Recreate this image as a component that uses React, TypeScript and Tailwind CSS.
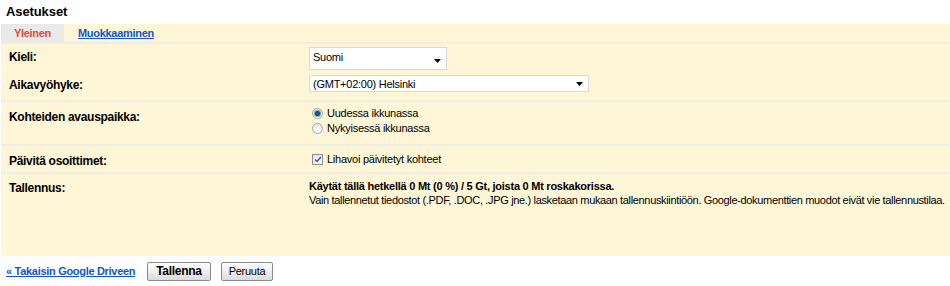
import React from "react";

const font = { fontFamily: '"Liberation Sans", Arial, sans-serif' };

function Arrow() {
  return (
    <svg width="7" height="4" viewBox="0 0 7 4" className="shrink-0">
      <path d="M0 0h7L3.5 4z" fill="#000" />
    </svg>
  );
}

function Radio({ checked }: { checked?: boolean }) {
  return (
    <span className="flex h-[11px] w-[11px] items-center justify-center rounded-full border border-[#a4a4a4] bg-gradient-to-b from-[#e6e6e6] to-[#ffffff]">
      {checked && <span className="h-[5px] w-[5px] rounded-full bg-[#1e4e7a] shadow-[0_0_0_1px_#6c9cc6]" />}
    </span>
  );
}

function Label({ children, className = "" }: { children: React.ReactNode; className?: string }) {
  return <div className={`pl-2 text-[12px] font-bold tracking-[-0.3px] ${className}`}>{children}</div>;
}

export default function App() {
  return (
    <div className="h-[286px] w-[950px] bg-white text-[11px] tracking-[-0.25px] text-black" style={font}>
      <div className="pl-[6px] pt-[3px] pb-[4px] text-[13px] font-bold leading-[17px] tracking-[-0.1px]">Asetukset</div>
      <div className="ml-[1px] h-[232px] bg-[#fff6d7]">
        <div className="flex h-[18px] items-stretch font-bold tracking-[-0.3px]">
          <div className="flex w-[63px] items-center justify-center bg-[#e9e9e9] text-[#dd4b39]">Yleinen</div>
          <a className="ml-[14px] flex items-center text-[#1155cc] underline">Muokkaaminen</a>
        </div>

        <div className="grid h-[58px] grid-cols-[308px_1fr] grid-rows-[23px_17px] gap-y-[5px] border-t-2 border-[#efeee3] pt-[3px]">
          <Label className="pt-[1px]">Kieli:</Label>
          <div className="relative w-[138px] border border-[#d9d9d9] bg-white pl-[3px] pt-[2px] leading-[14px]">
            Suomi
            <span className="absolute right-[5px] bottom-[6px] flex"><Arrow /></span>
          </div>
          <Label className="pt-[1px]">Aikavyöhyke:</Label>
          <div className="relative w-[280px] border border-[#d9d9d9] bg-white pl-[3px] pt-[1px] leading-[14px]">
            (GMT+02:00) Helsinki
            <span className="absolute right-[5px] top-[6px] flex"><Arrow /></span>
          </div>
        </div>

        <div className="grid h-[44px] grid-cols-[308px_1fr] border-t-2 border-[#efeee3] pt-[4px]">
          <Label className="pt-[2px]">Kohteiden avauspaikka:</Label>
          <div className="flex flex-col gap-[1px] pl-[3px]">
            <label className="flex items-center gap-[4px] leading-[14px]"><Radio checked /> Uudessa ikkunassa</label>
            <label className="flex items-center gap-[4px] leading-[14px]"><Radio /> Nykyisessä ikkunassa</label>
          </div>
        </div>

        <div className="grid h-[28px] grid-cols-[308px_1fr] border-t-2 border-[#efeee3] pt-[6px]">
          <Label>Päivitä osoittimet:</Label>
          <label className="flex items-center gap-[4px] self-start pl-[3px] leading-[14px]">
            <span className="flex h-[11px] w-[11px] items-center justify-center border border-[#8e8f8f] bg-gradient-to-b from-[#dfe6f0] to-[#ffffff]">
              <svg width="8" height="7" viewBox="0 0 8 7"><path d="M1 3.5l2 2L7 1" stroke="#4a5e93" strokeWidth="1.5" fill="none" /></svg>
            </span>
            Lihavoi päivitetyt kohteet
          </label>
        </div>

        <div className="grid grid-cols-[308px_1fr] border-t-2 border-[#efeee3] pt-[5px]">
          <Label>Tallennus:</Label>
          <div className="leading-[14px]">
            <div className="font-bold">Käytät tällä hetkellä 0 Mt (0 %) / 5 Gt, joista 0 Mt roskakorissa.</div>
            <div className="whitespace-nowrap tracking-[-0.34px]">Vain tallennetut tiedostot (.PDF, .DOC, .JPG jne.) lasketaan mukaan tallennuskiintiöön. Google-dokumenttien muodot eivät vie tallennustilaa.</div>
          </div>
        </div>
      </div>
      <div className="flex items-center gap-[10px] pl-[6px] pt-[6px]">
        <a className="mr-[2px] font-bold tracking-[-0.3px] text-[#1155cc] underline">« Takaisin Google Driveen</a>
        <button className="h-[19px] rounded-[2px] border border-[#8b8b8b] bg-gradient-to-b from-[#ffffff] to-[#dcdcdc] px-[8px] text-[12px] font-bold leading-[15px] tracking-[-0.3px]">Tallenna</button>
        <button className="h-[19px] rounded-[2px] border border-[#8b8b8b] bg-gradient-to-b from-[#ffffff] to-[#dcdcdc] px-[7px] text-[11px] leading-[15px]">Peruuta</button>
      </div>
    </div>
  );
}
